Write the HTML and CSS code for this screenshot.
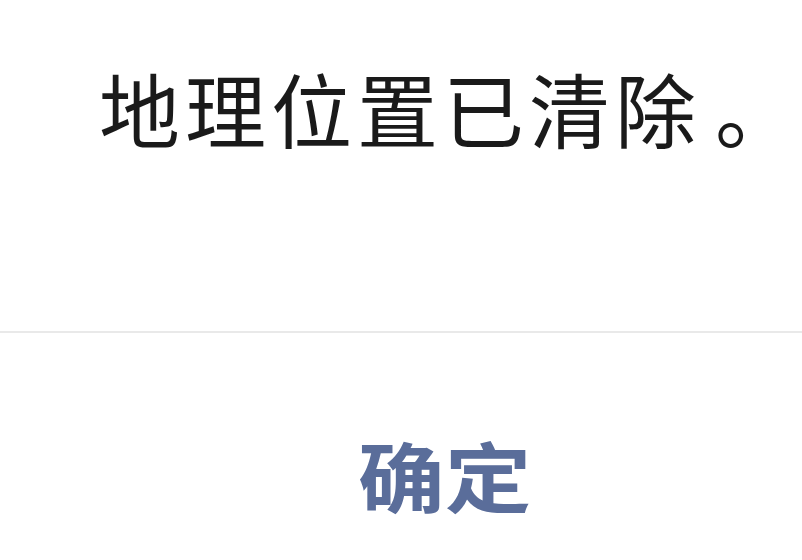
FILE: index.html
```html
<!DOCTYPE html>
<html lang="zh-CN">
<head>
<meta charset="utf-8">
<link rel="stylesheet" href="styles.css">
</head>
<body>
<div class="dialog">
  <div class="message">地理位置已清除<span class="stop">。</span></div>
  <div class="divider"></div>
  <div class="actions"><span class="ok">确定</span></div>
</div>
</body>
</html>
```
FILE: styles.css
```css
html, body {
  margin: 0;
  padding: 0;
  background: #ffffff;
}
.dialog {
  width: 802px;
  height: 560px;
  overflow: hidden;
  font-family: "Noto Sans CJK SC", "Noto Sans", sans-serif;
}
.message {
  padding: 58px 0 0 99px;
  height: 331px;
  box-sizing: border-box;
  font-size: 81px;
  line-height: 1.2;
  letter-spacing: 5px;
  color: #1a1a1a;
  white-space: nowrap;
}
.stop {
  margin-left: 14px;
}
.divider {
  height: 2px;
  background: #e9e9e9;
}
.actions {
  padding: 96px 0 0 358px;
}
.ok {
  display: inline-block;
  font-size: 76px;
  line-height: 1.2;
  font-weight: 700;
  color: #5a6d9a;
  transform: scaleX(1.14);
  transform-origin: left center;
}
```
